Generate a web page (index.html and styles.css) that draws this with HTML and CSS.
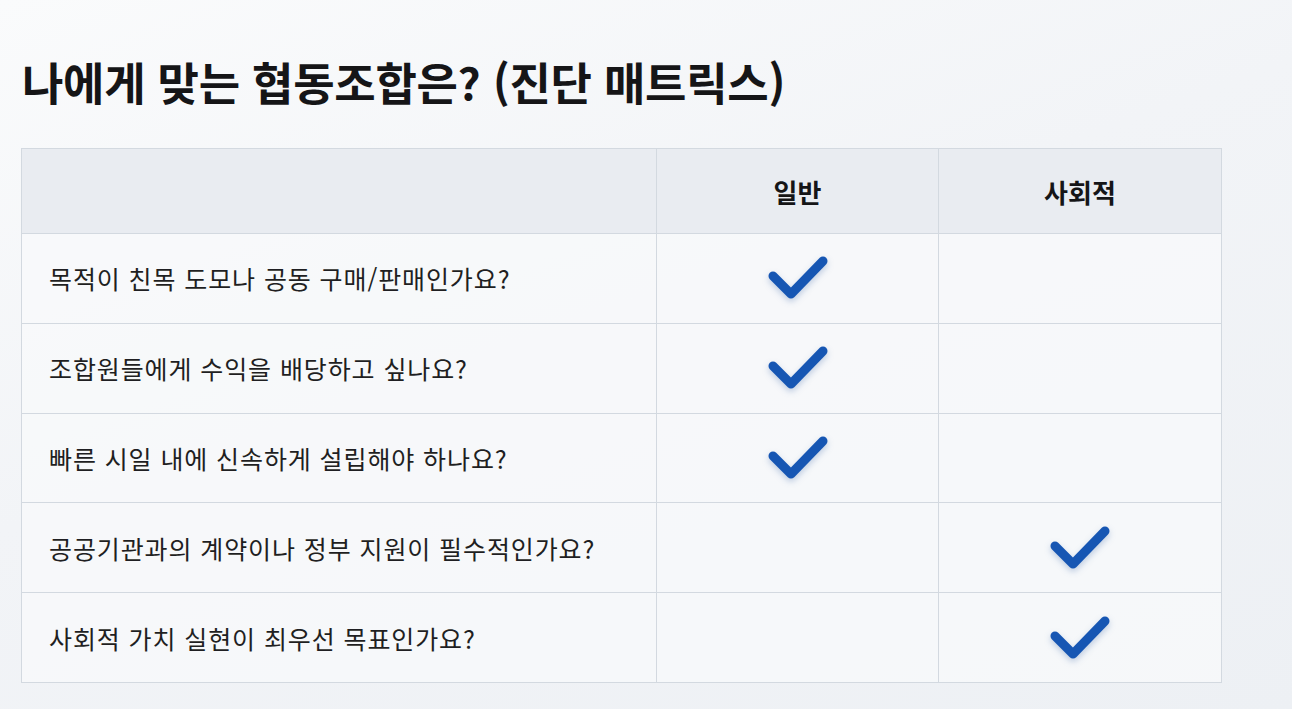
FILE: index.html
```html
<!DOCTYPE html>
<html lang="ko">
<head>
<meta charset="utf-8">
<link rel="stylesheet" href="styles.css">
</head>
<body>
<main class="page">
  <h1 class="title">나에게 맞는 협동조합은? (진단 매트릭스)</h1>
  <table class="matrix">
    <colgroup>
      <col class="c1">
      <col class="c2">
      <col class="c3">
    </colgroup>
    <thead>
      <tr>
        <th class="q-head"></th>
        <th class="col-head">일반</th>
        <th class="col-head">사회적</th>
      </tr>
    </thead>
    <tbody>
      <tr>
        <td class="q">목적이 친목 도모나 공동 구매/판매인가요?</td>
        <td class="mark"><svg class="check" viewBox="0 0 64 48" width="64" height="48"><path d="M7 23 L25 41 L57 8"/></svg></td>
        <td class="mark"></td>
      </tr>
      <tr>
        <td class="q">조합원들에게 수익을 배당하고 싶나요?</td>
        <td class="mark"><svg class="check" viewBox="0 0 64 48" width="64" height="48"><path d="M7 23 L25 41 L57 8"/></svg></td>
        <td class="mark"></td>
      </tr>
      <tr>
        <td class="q">빠른 시일 내에 신속하게 설립해야 하나요?</td>
        <td class="mark"><svg class="check" viewBox="0 0 64 48" width="64" height="48"><path d="M7 23 L25 41 L57 8"/></svg></td>
        <td class="mark"></td>
      </tr>
      <tr>
        <td class="q">공공기관과의 계약이나 정부 지원이 필수적인가요?</td>
        <td class="mark"></td>
        <td class="mark"><svg class="check" viewBox="0 0 64 48" width="64" height="48"><path d="M7 23 L25 41 L57 8"/></svg></td>
      </tr>
      <tr>
        <td class="q">사회적 가치 실현이 최우선 목표인가요?</td>
        <td class="mark"></td>
        <td class="mark"><svg class="check" viewBox="0 0 64 48" width="64" height="48"><path d="M7 23 L25 41 L57 8"/></svg></td>
      </tr>
    </tbody>
  </table>
</main>
</body>
</html>
```

FILE: styles.css
```css
html, body {
  margin: 0;
  padding: 0;
}
body {
  width: 1292px;
  height: 709px;
  overflow: hidden;
  background: linear-gradient(160deg, #fafbfc 0%, #f2f4f7 45%, #edf0f4 100%);
  font-family: "Noto Sans CJK KR", "Noto Sans", sans-serif;
  color: #1f1f22;
}
.page {
  padding: 52px 0 0 21px;
}
.title {
  margin: 0 0 0 1px;
  font-size: 45px;
  font-weight: 700;
  line-height: 60px;
  color: #151517;
  letter-spacing: -0.3px;
}
.matrix {
  margin-top: 36px;
  width: 1200px;
  border-collapse: collapse;
  table-layout: fixed;
}
.c1 { width: 635px; }
.c2 { width: 282px; }
.c3 { width: 283px; }
.matrix th, .matrix td {
  border: 1px solid #d3d9e0;
  padding: 0;
}
.matrix thead th {
  height: 84px;
  background: #e9ecf1;
  font-size: 26px;
  font-weight: 700;
  color: #151517;
  text-align: center;
}
.matrix tbody td {
  height: 88.8px;
  background: rgba(248, 249, 251, 0.75);
}
.q {
  padding-left: 27px !important;
  font-size: 25px;
  font-weight: 400;
  letter-spacing: 0.9px;
  color: #1f1f22;
}
.mark {
  text-align: center;
  vertical-align: middle;
}
.check {
  display: inline-block;
  vertical-align: middle;
  margin-top: -2px;
  filter: drop-shadow(0 3px 3px rgba(20, 70, 150, 0.25));
}
.check path {
  fill: none;
  stroke: #1656b3;
  stroke-width: 9;
  stroke-linecap: round;
  stroke-linejoin: round;
}
```
